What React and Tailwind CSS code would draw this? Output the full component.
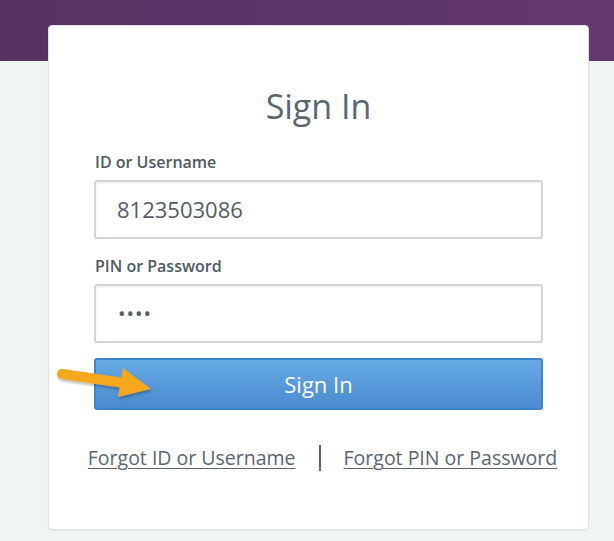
export default function App() {
  return (
    <div className="relative min-h-[541px] bg-[#f1f4f5]" style={{ fontFamily: '"Open Sans", "Noto Sans", sans-serif' }}>
      <div className="h-[61px] bg-gradient-to-r from-[#563262] to-[#633870]" />
      <div className="relative -mt-[36px] ml-[48px] w-[541px] h-[505px] bg-white border border-[#dfe3e5] rounded-[4px] shadow-[0_1px_2px_rgba(0,0,0,0.06)] flex flex-col items-center px-[45px]">
        <h1 className="mt-[59px] text-[34px] leading-[42px] text-[#5a6670] font-normal">Sign In</h1>
        <div className="self-stretch mt-[25px] flex flex-col">
          <label className="text-[16px] leading-[20px] font-semibold text-[#4e5a64] ml-[1px]">ID or Username</label>
          <div className="mt-[8px] h-[59px] border-2 border-[#d3d6d8] rounded-[3px] shadow-[inset_0_1px_2px_rgba(0,0,0,0.08)] flex items-center pl-[21px] text-[22px] text-[#555e66]">8123503086</div>
          <label className="mt-[17px] text-[16px] leading-[20px] font-semibold text-[#4e5a64] ml-[1px]">PIN or Password</label>
          <div className="mt-[8px] h-[59px] border-2 border-[#d3d6d8] rounded-[3px] shadow-[inset_0_1px_2px_rgba(0,0,0,0.08)] flex items-center pl-[22px] text-[20px] text-[#555e66] tracking-[1px]">••••</div>
          <button className="relative mt-[15px] h-[52px] border-2 border-[#3d84c8] rounded-[3px] bg-gradient-to-b from-[#65aae5] to-[#4a8bcf] text-white text-[22px] flex items-center justify-center">
            Sign In
          </button>
        </div>
        <div className="mt-[33px] ml-[8px] flex items-center shrink-0 whitespace-nowrap text-[19.5px] text-[#5a6670]">
          <a className="underline underline-offset-[3px] decoration-1">Forgot ID or Username</a>
          <span className="mx-[23px] w-[2px] h-[26px] bg-[#5a6670]" />
          <a className="underline underline-offset-[3px] decoration-1">Forgot PIN or Password</a>
        </div>
      </div>
      <svg className="absolute left-0 top-0 pointer-events-none" width="614" height="541" viewBox="0 0 614 541">
        <defs>
          <filter id="sh" x="-20%" y="-40%" width="140%" height="180%">
            <feDropShadow dx="1" dy="2" stdDeviation="1.5" floodColor="#000" floodOpacity="0.3" />
          </filter>
        </defs>
        <g filter="url(#sh)" fill="#f6a81a">
          <path d="M62 374 L124 383" stroke="#f6a81a" strokeWidth="10" strokeLinecap="round" />
          <polygon points="123,368 151,389 118,397" />
        </g>
      </svg>
    </div>
  );
}
